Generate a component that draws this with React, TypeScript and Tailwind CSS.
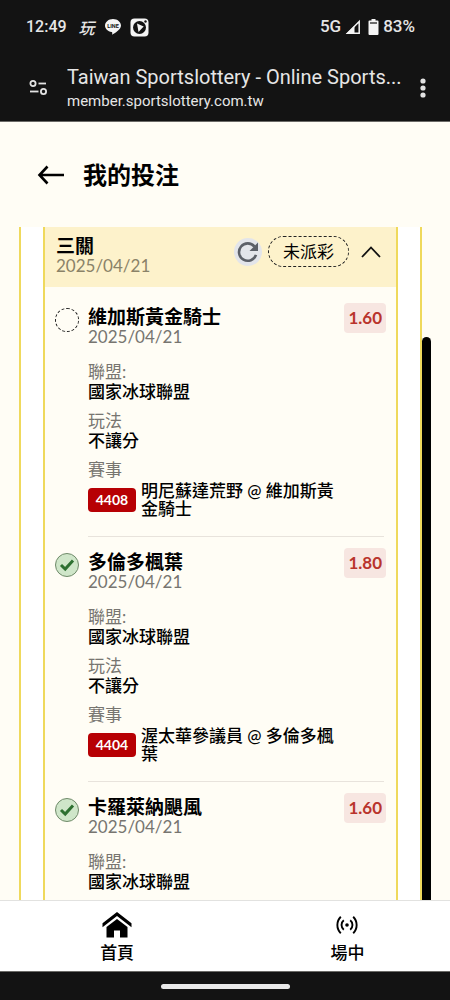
import { clsx } from "clsx";

type Bet = {
  team: string;
  date: string;
  odds: string;
  won: boolean;
  fields: { label: string; value: string }[];
  match?: { code: string; name: string };
};

const bets: Bet[] = [
  {
    team: "維加斯黃金騎士",
    date: "2025/04/21",
    odds: "1.60",
    won: false,
    fields: [
      { label: "聯盟:", value: "國家冰球聯盟" },
      { label: "玩法", value: "不讓分" },
    ],
    match: { code: "4408", name: "明尼蘇達荒野 @ 維加斯黃金騎士" },
  },
  {
    team: "多倫多楓葉",
    date: "2025/04/21",
    odds: "1.80",
    won: true,
    fields: [
      { label: "聯盟:", value: "國家冰球聯盟" },
      { label: "玩法", value: "不讓分" },
    ],
    match: { code: "4404", name: "渥太華參議員 @ 多倫多楓葉" },
  },
  {
    team: "卡羅萊納颶風",
    date: "2025/04/21",
    odds: "1.60",
    won: true,
    fields: [{ label: "聯盟:", value: "國家冰球聯盟" }],
  },
];

function StatusBar() {
  return (
    <div className="flex h-[54px] items-center justify-between pl-[26px] pr-[35px] text-[17px] font-medium">
      <div className="flex items-center">
        <span className="text-base">12:49</span>
        <span className="ml-3 font-['Noto_Sans_CJK_TC',sans-serif] text-base italic leading-5">玩</span>
        <svg className="ml-[9px]" width="18" height="18" viewBox="0 0 18 18" aria-label="LINE">
          <path
            d="M9 1C4.600 1 1 3.900 1 7.600c0 3.200 2.800 5.900 6.600 6.500.8.200.8.600.5 2.600 2.700-1.200 8.900-5.100 8.900-9.100C17 3.900 13.400 1 9 1z"
            fill="#f5f5f5"
          />
          <text x="9" y="9.500" textAnchor="middle" fontSize="5.500" fontWeight="700" fill="#131313">
            LINE
          </text>
        </svg>
        <svg className="ml-2" width="19" height="19" viewBox="0 0 19 19" aria-hidden="true">
          <rect x="0.500" y="0.500" width="18" height="18" rx="4" fill="#f5f5f5" />
          <circle cx="9.500" cy="9.500" r="6.500" fill="#131313" />
          <path d="M7 5.500l1.500 8.500 5.200-5.500z" fill="#f5f5f5" />
          <circle cx="15.500" cy="3.500" r="1.200" fill="#131313" />
        </svg>
      </div>
      <div className="flex items-center">
        <span>5G</span>
        <svg className="ml-1" width="16" height="16" viewBox="0 0 16 16" aria-hidden="true">
          <path d="M14.200 2.500v11.700H2.500z" fill="none" stroke="#f5f5f5" strokeWidth="1.500" />
          <path d="M9.500 6.800V15H1z" fill="#f5f5f5" />
        </svg>
        <svg className="ml-[7px] mr-1" width="11" height="16" viewBox="0 0 11 16" aria-hidden="true">
          <path d="M3.500 0h4v1.500H9.500a1 1 0 0 1 1 1V15a1 1 0 0 1-1 1h-8a1 1 0 0 1-1-1V2.500a1 1 0 0 1 1-1h2z" fill="#f5f5f5" />
          <path d="M2 4h7" stroke="#131313" strokeWidth="1.200" />
        </svg>
        <span>83%</span>
      </div>
    </div>
  );
}

function BrowserBar() {
  return (
    <div className="flex h-[68px] items-center border-b border-[#6b6a67]">
      <button type="button" aria-label="Site settings" className="ml-[29px] mr-5 shrink-0">
        <svg width="18" height="18" viewBox="0 0 18 18" fill="none" stroke="#e3e3e3" strokeWidth="1.800">
          <circle cx="4" cy="4.500" r="2.600" />
          <path d="M9.500 4.500H17" />
          <circle cx="14.500" cy="12.500" r="2.600" />
          <path d="M1 12.500h8.500" />
        </svg>
      </button>
      <div className="min-w-0 flex-1">
        <div className="truncate text-[20px] leading-[26px]">Taiwan Sportslottery - Online Sports...</div>
        <div className="truncate text-[15px] leading-[22px]">member.sportslottery.com.tw</div>
      </div>
      <button type="button" aria-label="Menu" className="mr-[24px] shrink-0">
        <svg width="6" height="22" viewBox="0 0 6 22" fill="#e3e3e3">
          <circle cx="3" cy="4" r="2.600" />
          <circle cx="3" cy="11" r="2.600" />
          <circle cx="3" cy="18" r="2.600" />
        </svg>
      </button>
    </div>
  );
}

function ResultIcon({ won }: { won: boolean }) {
  return (
    <span
      className={clsx(
        "mt-px flex size-6 shrink-0 items-center justify-center rounded-full border",
        won ? "border-[#6f8a69] bg-[#cfe6c9]" : "border-dashed border-[#222]"
      )}
    >
      {won && (
        <svg width="16" height="14" viewBox="0 0 16 14" fill="none" aria-label="中獎">
          <path d="M2 7l4.200 4L14 2.500" stroke="#2d7030" strokeWidth="3" />
        </svg>
      )}
    </span>
  );
}

function BetItem({ bet, last }: { bet: Bet; last: boolean }) {
  return (
    <li className="flex gap-[9px] px-2.5 pt-[15px]">
      <ResultIcon won={bet.won} />
      <div className="min-w-0 flex-1">
        <div className="flex items-start justify-between">
          <div>
            <h3 className="text-[19px] font-bold leading-5">{bet.team}</h3>
            <p className="text-[17px] leading-5 text-[#777570]">{bet.date}</p>
          </div>
          <span className="-mt-1 rounded-[4px] bg-[#f7e6e1] px-1 text-[17px] font-bold leading-[30px] text-[#b9342c]">
            {bet.odds}
          </span>
        </div>
        <dl className="mt-[15px] flex flex-col gap-[9px] pr-[42px] text-[17px] leading-5">
          {bet.fields.map((field) => (
            <div key={field.label}>
              <dt className="text-[#777570]">{field.label}</dt>
              <dd className="font-medium">{field.value}</dd>
            </div>
          ))}
          {bet.match && (
            <div>
              <dt className="text-[#777570]">賽事</dt>
              <dd className="mt-0.5 flex items-center gap-[5px]">
                <span className="w-12 shrink-0 rounded-[4px] bg-[#b70004] text-center text-sm font-bold leading-6 text-white">
                  {bet.match.code}
                </span>
                <span className="font-medium leading-[18px]">{bet.match.name}</span>
              </dd>
            </div>
          )}
        </dl>
        {!last && <hr className="mr-0.5 mt-[18px] border-[#e8e3dc]" />}
      </div>
    </li>
  );
}

function BetCard() {
  return (
    <section className="flex-1 border-x-2 border-[#efd95c] bg-[#fffdf5]">
      <header className="flex h-[60px] items-start justify-between bg-[#fdf2cb] pl-[11px] pr-[15px] pt-[9px]">
        <div>
          <h2 className="text-[19px] font-bold leading-5">三關</h2>
          <p className="text-[17px] leading-5 text-[#8a8268]">2025/04/21</p>
        </div>
        <div className="flex items-center">
          <button type="button" aria-label="重新整理" className="mr-1.5">
            <svg width="28" height="28" viewBox="0 0 28 28" fill="none">
              <circle cx="14" cy="14" r="14" fill="#e3e5ea" />
              <path d="M22 16.800a8.700 8.700 0 1 1-1.500-8.200" stroke="#5c6068" strokeWidth="2.600" />
              <path d="M24 4.500v8.500h-8.500z" fill="#5c6068" />
            </svg>
          </button>
          <span className="rounded-full border border-dashed border-[#222] px-3.5 text-[17px] leading-[29px]">
            未派彩
          </span>
          <button type="button" aria-label="收合" className="ml-3">
            <svg width="20" height="12" viewBox="0 0 20 12" fill="none" stroke="#111" strokeWidth="1.800">
              <path d="M1 11l9-9.500L19 11" />
            </svg>
          </button>
        </div>
      </header>
      <ul className="pt-[5px]">
        {bets.map((bet, i) => (
          <BetItem key={bet.team} bet={bet} last={i === bets.length - 1} />
        ))}
      </ul>
    </section>
  );
}

function BottomNav() {
  const item = "flex w-[51.4%] shrink-0 flex-col items-center text-[17px] font-medium leading-6";
  return (
    <nav className="flex h-[71px] shrink-0 overflow-hidden border-t border-[#e2e2e0] bg-white pl-0.5 pt-2.5">
      <a href="#home" className={item}>
        <svg width="30" height="30" viewBox="0 0 30 30" aria-hidden="true">
          <path d="M15 1L0.500 12.200v4L15 5l14.500 11.200v-4z" />
          <path d="M15 8L4.500 16V26.500h7.500v-7h6v7h7.500V16z" />
        </svg>
        首頁
      </a>
      <a href="#live" className={item}>
        <svg width="30" height="30" viewBox="0 0 30 30" fill="none" stroke="#000" strokeWidth="1.900" aria-hidden="true">
          <circle cx="15" cy="14" r="1.800" fill="#000" stroke="none" />
          <path d="M8.800 5.800a11.500 11.500 0 0 0 0 16.400M21.200 5.800a11.500 11.500 0 0 1 0 16.400" />
          <path d="M11.800 9.300a6 6 0 0 0 0 9.400M18.200 9.300a6 6 0 0 1 0 9.400" />
        </svg>
        場中
      </a>
    </nav>
  );
}

export default function App() {
  return (
    <div className="flex h-screen flex-col overflow-hidden bg-[#fffdf5] font-['Lato','Noto_Sans_CJK_TC',sans-serif] text-black">
      <div className="shrink-0 bg-[#131313] font-['Roboto','Noto_Sans_CJK_TC',sans-serif] text-[#e6e6e6]">
        <StatusBar />
        <BrowserBar />
      </div>

      <header className="flex h-[105px] shrink-0 items-center gap-[19px] pl-[37px]">
        <button type="button" aria-label="返回">
          <svg width="27" height="20" viewBox="0 0 27 20" fill="none" stroke="#000" strokeWidth="2.600">
            <path d="M10.500 1.500L2.500 10l8 8.500M2 10h25" />
          </svg>
        </button>
        <h1 className="text-2xl font-bold leading-8">我的投注</h1>
      </header>

      <main className="relative min-h-0 flex-1 pl-[19px] pr-7">
        <div className="h-full overflow-y-auto [scrollbar-width:none]">
          <div className="flex min-h-full border-x-2 border-[#efd95c] bg-white px-[22px]">
            <BetCard />
          </div>
        </div>
        {/* Scroll thumb */}
        <div className="absolute bottom-0 right-[19px] top-[110px] w-[9px] rounded-t-full bg-black" />
      </main>

      <BottomNav />

      <div className="flex h-[29px] shrink-0 items-center justify-center border-t border-[#6b6a67] bg-[#131313]">
        <div className="h-[5px] w-[129px] rounded-full bg-[#e9e9e9]" />
      </div>
    </div>
  );
}
